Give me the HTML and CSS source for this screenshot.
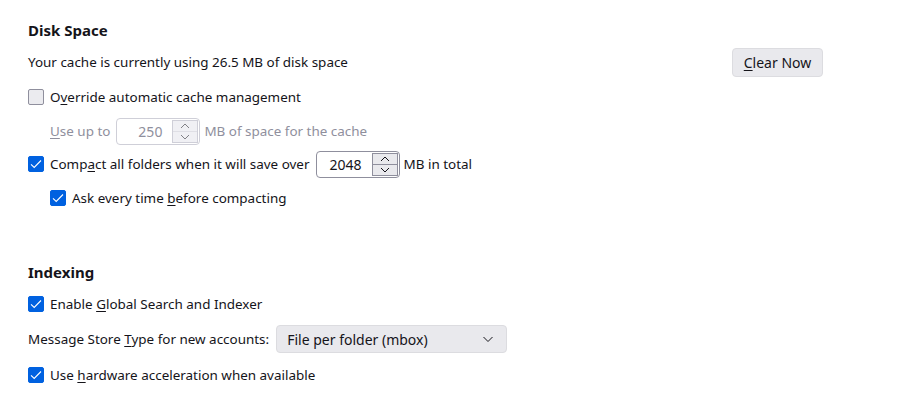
FILE: index.html
```html
<!DOCTYPE html>
<html lang="en">
<head>
    <meta charset="UTF-8">
    <title>Disk Space</title>
    <link rel="stylesheet" href="styles.css">
</head>
<body>
<div class="pane">
    <h2 class="head">Disk Space</h2>
    <div class="row cache">
        <span>Your cache is currently using 26.5 MB of disk space</span>
        <button class="btn"><u>C</u>lear Now</button>
    </div>
    <label class="row r-override">
        <span class="check"></span>
        <span>O<u>v</u>erride automatic cache management</span>
    </label>
    <div class="row r-useup sub disabled">
        <span><u>U</u>se up to</span>
        <span class="spin"><span class="num">250</span><span class="arrows"><span class="up"></span><span class="down"></span></span></span>
        <span>MB of space for the cache</span>
    </div>
    <label class="row r-compact">
        <span class="check on"></span>
        <span>Comp<u>a</u>ct all folders when it will save over</span>
        <span class="spin"><span class="num">2048</span><span class="arrows"><span class="up"></span><span class="down"></span></span></span>
        <span>MB in total</span>
    </label>
    <label class="row r-ask sub">
        <span class="check on"></span>
        <span>Ask every time <u>b</u>efore compacting</span>
    </label>

    <h2 class="head h-index">Indexing</h2>
    <label class="row r-enable">
        <span class="check on"></span>
        <span>Enable <u>G</u>lobal Search and Indexer</span>
    </label>
    <div class="row r-store">
        <span>Message Store <u>T</u>ype for new accounts:</span>
        <span class="select">File per folder (mbox)
            <svg width="12" height="8" viewBox="0 0 12 8"><path d="M1.5 2l4.5 4.5 4.5-4.5" fill="none" stroke="#15141a" stroke-width="1"/></svg>
        </span>
    </div>
    <label class="row r-hw">
        <span class="check on"></span>
        <span>Use <u>h</u>ardware acceleration when available</span>
    </label>
</div>
</body>
</html>
```

FILE: styles.css
```css
body{margin:0;background:#fff;color:#15141a;font:13.45px "Noto Sans","Open Sans",Arial,sans-serif;}
u{text-decoration-thickness:1px;text-underline-offset:2px;}
.pane{padding:0 0 0 28px;width:795px;}
.head{margin:20px 0 0;height:20px;line-height:20px;font-size:15px;font-weight:700;}
.h-index{margin-top:50px;}
.row{display:flex;align-items:center;height:28px;}
.cache{justify-content:space-between;margin-top:7px;height:30px;}
.r-override{margin-top:6px;}
.r-useup{margin-top:6px;}
.r-compact{margin-top:5px;}
.r-ask{margin-top:6px;}
.r-enable{margin-top:8px;}
.r-store{margin-top:7px;}
.r-hw{margin-top:8px;}
.sub{padding-left:22px;}
.disabled{color:#8f8f9d;}
.btn{font:inherit;font-size:14px;color:#15141a;background:#e9e9ed;border:1px solid #dcdce0;border-radius:4px;width:91px;height:29px;padding:0;}
.check{width:16px;height:16px;box-sizing:border-box;border:1px solid #8f8f9d;border-radius:2px;background:#ebebef;margin-right:6px;flex:none;}
.check.on{border-color:#0061e0;background:#0061e0 url("data:image/svg+xml;utf8,<svg xmlns='http://www.w3.org/2000/svg' width='16' height='16'><path d='M3 8.3l3.2 3.2 6.8-7' fill='none' stroke='white' stroke-width='1.1'/></svg>") center/16px no-repeat;}
.spin{display:flex;align-items:center;box-sizing:border-box;width:84px;height:27px;border:1px solid #8f8f9d;border-radius:4px;margin:0 4px 0 6px;background:#fff;}
.disabled .spin{border-color:#cfcfd8;}
.num{flex:1;text-align:right;padding-right:10px;font-size:14px;}
.arrows{display:flex;flex-direction:column;width:26px;height:23px;margin-right:1px;border:1px solid #8f8f9d;box-sizing:border-box;background:#e9e9ed;}
.disabled .arrows{border-color:#cfcfd8;background:#f0f0f4;}
.up,.down{flex:1;background:center/10px 6px no-repeat;}
.up{border-bottom:1px solid #8f8f9d;background-image:url("data:image/svg+xml;utf8,<svg xmlns='http://www.w3.org/2000/svg' width='10' height='6'><path d='M1 5l4-4 4 4' fill='none' stroke='%2315141a' stroke-width='1'/></svg>");}
.down{background-image:url("data:image/svg+xml;utf8,<svg xmlns='http://www.w3.org/2000/svg' width='10' height='6'><path d='M1 1l4 4 4-4' fill='none' stroke='%2315141a' stroke-width='1'/></svg>");}
.disabled .up{border-bottom-color:#cfcfd8;opacity:.5;}
.disabled .down{opacity:.5;}
.select{display:flex;align-items:center;justify-content:space-between;box-sizing:border-box;width:231px;height:28px;margin-left:7px;padding:0 12px 0 10px;background:#e9e9ed;border:1px solid #dcdce0;border-radius:4px;font-size:14px;}
```
